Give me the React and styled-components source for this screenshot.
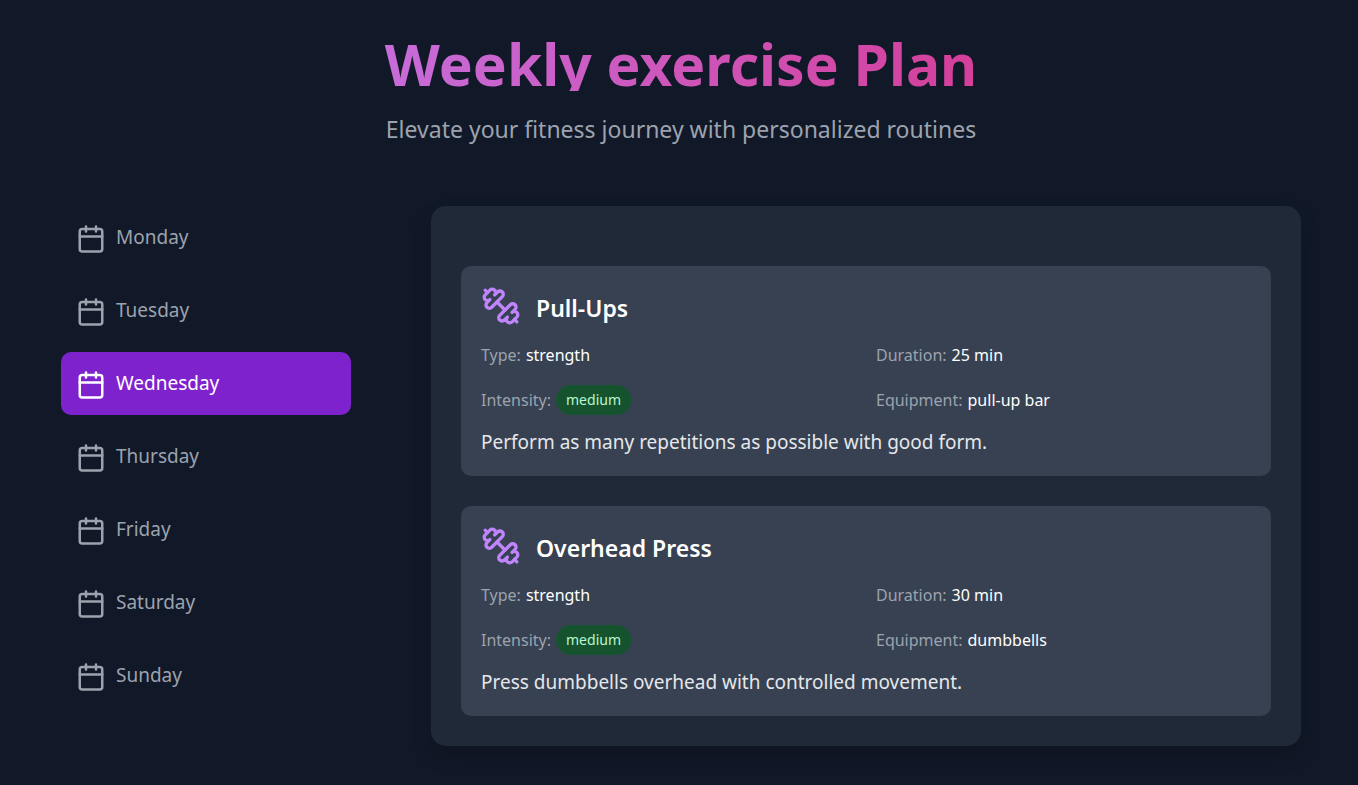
import React, { useState } from 'react'
import styled, { createGlobalStyle } from 'styled-components'

const GlobalStyle = createGlobalStyle`
  * {
    box-sizing: border-box;
    margin: 0;
  }

  body {
    background: #111827;
    color: #ffffff;
    font-family: 'Noto Sans', sans-serif;
  }
`;

const Page = styled.main`
  padding: 31px 57px 39px 61px;
`;

const Header = styled.header`
  margin-bottom: 60px;
  text-align: center;
`;

const Title = styled.h1`
  margin-bottom: 22px;
  padding-top: 6px;
  background: linear-gradient(to right, #c084fc, #db2777);
  background-clip: text;
  color: transparent;
  font-size: 57px;
  font-weight: 700;
  line-height: 54px;
`;

const Subtitle = styled.p`
  color: #9ca3af;
  font-size: 23px;
  line-height: 33px;
`;

const Layout = styled.div`
  display: grid;
  grid-template-columns: 1fr 3fr;
  gap: 80px;
`;

const Days = styled.nav`
  display: flex;
  flex-direction: column;
  gap: 10px;
`;

const Day = styled.button`
  display: flex;
  align-items: center;
  gap: 10px;
  height: 63px;
  padding: 0 15px 2px;
  border: 0;
  border-radius: 10px;
  background: ${({ $active }) => $active ? '#7e22ce' : 'transparent'};
  color: ${({ $active }) => $active ? '#ffffff' : '#9ca3af'};
  font-family: inherit;
  font-size: 19px;
  cursor: pointer;
`;

const CalendarIcon = styled.svg`
  width: 30px;
  height: 30px;
  margin-top: 4px;
`;

const Exercises = styled.section`
  display: flex;
  flex-direction: column;
  gap: 30px;
  padding: 60px 30px 30px;
  border-radius: 15px;
  background: #1f2937;
  box-shadow: 0 10px 20px rgba(0, 0, 0, 0.15);
`;

const Card = styled.article`
  padding: 20px;
  border-radius: 10px;
  background: #374151;
`;

const CardHeader = styled.div`
  display: flex;
  align-items: center;
  gap: 15px;
  height: 40px;
  margin-bottom: 14px;
`;

const DumbbellIcon = styled.svg`
  width: 40px;
  height: 40px;
  color: #c084fc;
`;

const Name = styled.h2`
  padding-top: 4px;
  font-size: 23px;
  font-weight: 600;
  line-height: 36px;
`;

const Details = styled.div`
  display: grid;
  grid-template-columns: 1fr 1fr;
  row-gap: 15px;
  column-gap: 20px;
  margin-bottom: 11px;
`;

const Detail = styled.p`
  display: flex;
  align-items: center;
  gap: 5px;
  height: 30px;
  font-size: 16px;
`;

const Label = styled.span`
  color: #9ca3af;
`;

const Badge = styled.span`
  padding: 0 10px;
  border-radius: 15px;
  background: #14532d;
  color: #bbf7d0;
  font-size: 14px;
  line-height: 30px;
`;

const Description = styled.p`
  padding-top: 2px;
  color: #e5e7eb;
  font-size: 19px;
  line-height: 28px;
`;

const days = ['Monday', 'Tuesday', 'Wednesday', 'Thursday', 'Friday', 'Saturday', 'Sunday'];

const exercises = [
  {
    name: 'Pull-Ups',
    type: 'strength',
    duration: 25,
    intensity: 'medium',
    equipment: 'pull-up bar',
    description: 'Perform as many repetitions as possible with good form.'
  },
  {
    name: 'Overhead Press',
    type: 'strength',
    duration: 30,
    intensity: 'medium',
    equipment: 'dumbbells',
    description: 'Press dumbbells overhead with controlled movement.'
  }
];

const stroke = {
  viewBox: '0 0 24 24',
  fill: 'none',
  stroke: 'currentColor',
  strokeWidth: 2,
  strokeLinecap: 'round',
  strokeLinejoin: 'round',
  'aria-hidden': true
};

const App = () => {

  const [selected, setSelected] = useState('Wednesday');

  return (
    <>
      <GlobalStyle />
      <Page>
        <Header>
          <Title>Weekly exercise Plan</Title>
          <Subtitle>Elevate your fitness journey with personalized routines</Subtitle>
        </Header>
        <Layout>
          <Days>
            {days.map((day) => (
              <Day
                key={day}
                type='button'
                $active={day === selected}
                onClick={() => { setSelected(day) }}
              >
                <CalendarIcon {...stroke}>
                  <path d='M8 2v4M16 2v4M3 10h18' />
                  <rect x='3' y='4' width='18' height='18' rx='2' />
                </CalendarIcon>
                {day}
              </Day>
            ))}
          </Days>
          <Exercises>
            {exercises.map((exercise) => (
              <Card key={exercise.name}>
                <CardHeader>
                  <DumbbellIcon {...stroke}>
                    <path d='M14.4 14.4 9.6 9.6' />
                    <path d='M18.657 21.485a2 2 0 1 1-2.829-2.828l-1.767 1.768a2 2 0 1 1-2.829-2.829l6.364-6.364a2 2 0 1 1 2.829 2.829l-1.768 1.767a2 2 0 1 1 2.828 2.829z' />
                    <path d='m21.5 21.5-1.4-1.4' />
                    <path d='M3.9 3.9 2.5 2.5' />
                    <path d='M6.404 12.768a2 2 0 1 1-2.829-2.829l1.768-1.767a2 2 0 1 1-2.828-2.829l2.828-2.828a2 2 0 1 1 2.829 2.828l1.767-1.768a2 2 0 1 1 2.829 2.829z' />
                  </DumbbellIcon>
                  <Name>{exercise.name}</Name>
                </CardHeader>
                <Details>
                  <Detail><Label>Type:</Label> {exercise.type}</Detail>
                  <Detail><Label>Duration:</Label> {exercise.duration} min</Detail>
                  <Detail><Label>Intensity:</Label> <Badge>{exercise.intensity}</Badge></Detail>
                  <Detail><Label>Equipment:</Label> {exercise.equipment}</Detail>
                </Details>
                <Description>{exercise.description}</Description>
              </Card>
            ))}
          </Exercises>
        </Layout>
      </Page>
    </>
  )
}

export default App
